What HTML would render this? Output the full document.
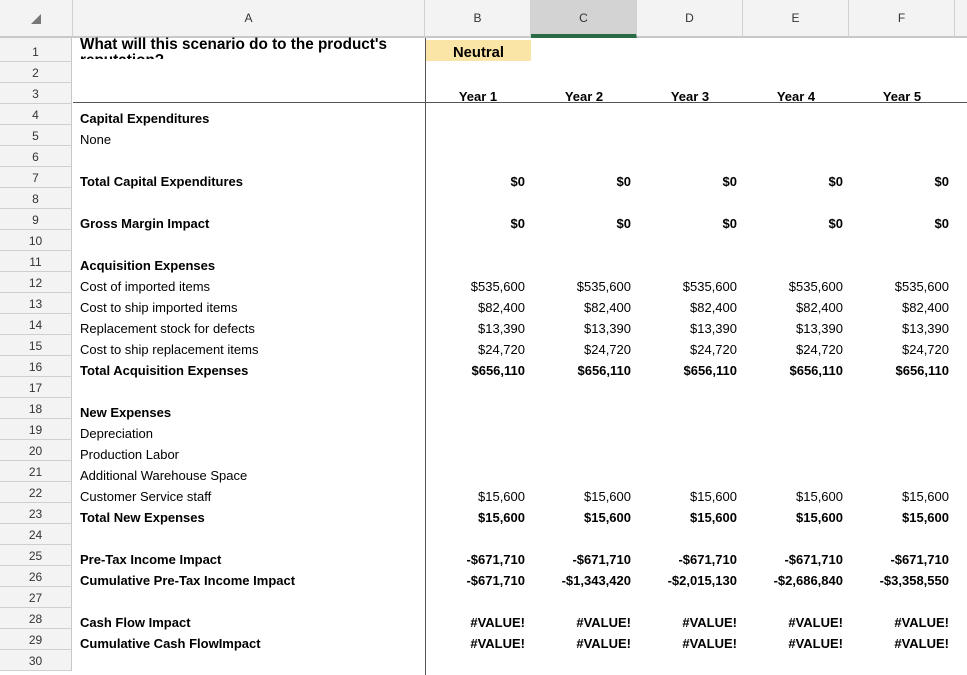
<!DOCTYPE html>
<html><head><meta charset="utf-8"><style>
*{margin:0;padding:0;box-sizing:border-box}
body{width:967px;height:675px;overflow:hidden;background:#fff;font-family:"Liberation Sans",Arial,sans-serif;position:relative;color:#000}
.hdr{position:absolute;top:0;height:38px;background:#f3f3f3;border-right:1px solid #d0d0d0;border-bottom:2px solid #c8c8c8;font-size:12px;color:#333;text-align:center;line-height:36px}
.rh{position:absolute;left:0;width:72px;background:#f3f3f3;border-bottom:1px solid #cfcfcf;border-right:1px solid #c8c8c8;font-size:12px;color:#333;text-align:center}
.c{position:absolute;font-size:13px;white-space:nowrap;height:21px;line-height:21px}
.b{font-weight:bold}
.n{text-align:right;width:100px}
</style></head><body>
<div class="hdr" style="left:0;width:73px"><svg width="10" height="10" style="position:absolute;left:31px;top:14px"><polygon points="10,0 10,10 0,10" fill="#777"/></svg></div>
<div class="hdr" style="left:73px;width:352px">A</div>
<div class="hdr" style="left:425px;width:106px">B</div>
<div class="hdr" style="left:531px;width:106px;background:#d3d3d3;border-bottom:4px solid #2a6b45;line-height:36px">C</div>
<div class="hdr" style="left:637px;width:106px">D</div>
<div class="hdr" style="left:743px;width:106px">E</div>
<div class="hdr" style="left:849px;width:106px">F</div>
<div class="hdr" style="left:955px;width:20px"></div>
<div class="rh" style="top:38px;height:24px;line-height:28px">1</div>
<div id="rows"></div>
<div style="position:absolute;left:425px;top:38px;width:1px;height:637px;background:#555"></div>
<div style="position:absolute;left:73px;top:102px;width:894px;height:1px;background:#555"></div>
<div class="c b" style="left:80px;top:37px;font-size:15.3px;height:22px;overflow:hidden;line-height:16px">What will this scenario do to the product's<br>reputation?</div>
<div style="position:absolute;left:426px;top:40px;width:105px;height:21px;background:#fbe5a6"></div>
<div class="c b" style="left:426px;top:42px;width:105px;text-align:center;font-size:14.8px;line-height:23px">Neutral</div>
<script>
var h='';
for(var i=2;i<=30;i++){var t=62+(i-2)*21;h+='<div class="rh" style="top:'+t+'px;height:21px;line-height:22px">'+i+'</div>';}
document.getElementById('rows').innerHTML=h;
function row(r){return 62+(r-2)*21;}
var L=[[4,'Capital Expenditures',1],[5,'None',0],[7,'Total Capital Expenditures',1],[9,'Gross Margin Impact',1],[11,'Acquisition Expenses',1],[12,'Cost of imported items',0],[13,'Cost to ship imported items',0],[14,'Replacement stock for defects',0],[15,'Cost to ship replacement items',0],[16,'Total Acquisition Expenses',1],[18,'New Expenses',1],[19,'Depreciation',0],[20,'Production Labor',0],[21,'Additional Warehouse Space',0],[22,'Customer Service staff',0],[23,'Total New Expenses',1],[25,'Pre-Tax Income Impact',1],[26,'Cumulative Pre-Tax Income Impact',1],[28,'Cash Flow Impact',1],[29,'Cumulative Cash FlowImpact',1]];
var s='';
L.forEach(function(x){s+='<div class="c'+(x[2]?' b':'')+'" style="left:80px;top:'+(row(x[0])+4)+'px">'+x[1]+'</div>';});
var cols=[425,531,637,743,849];
function vals(r,arr,b){arr.forEach(function(v,j){s+='<div class="c n'+(b?' b':'')+'" style="left:'+cols[j]+'px;top:'+(row(r)+4)+'px">'+v+'</div>';});}
function same(v){return [v,v,v,v,v];}
['Year 1','Year 2','Year 3','Year 4','Year 5'].forEach(function(v,j){s+='<div class="c b" style="left:'+cols[j]+'px;width:106px;text-align:center;top:'+(row(3)+3)+'px">'+v+'</div>';});
vals(7,same('$0'),1);vals(9,same('$0'),1);
vals(12,same('$535,600'));vals(13,same('$82,400'));vals(14,same('$13,390'));vals(15,same('$24,720'));vals(16,same('$656,110'),1);
vals(22,same('$15,600'));vals(23,same('$15,600'),1);
vals(25,same('-$671,710'),1);
vals(26,['-$671,710','-$1,343,420','-$2,015,130','-$2,686,840','-$3,358,550'],1);
vals(28,same('#VALUE!'),1);vals(29,same('#VALUE!'),1);
document.body.insertAdjacentHTML('beforeend',s);
</script>
</body></html>
